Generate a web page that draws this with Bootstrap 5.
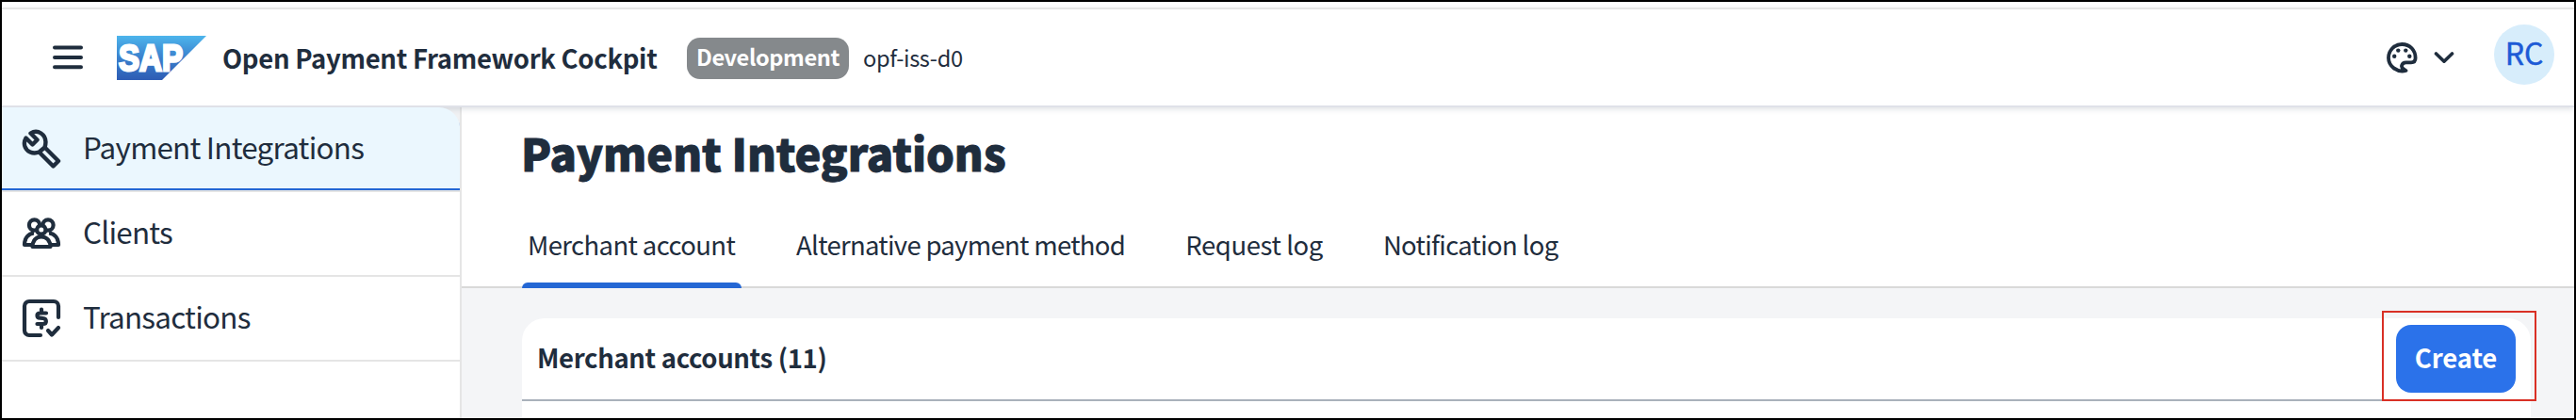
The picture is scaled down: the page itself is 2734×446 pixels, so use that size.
<!DOCTYPE html>
<html lang="en">
<head>
<meta charset="utf-8">
<title>Open Payment Framework Cockpit</title>
<link href="https://cdn.jsdelivr.net/npm/bootstrap@5.3.0/dist/css/bootstrap.min.css" rel="stylesheet">
<script src="https://cdn.jsdelivr.net/npm/bootstrap@5.3.0/dist/js/bootstrap.bundle.min.js" defer></script>
<style>
  body { font-family: "Noto Sans CJK SC", "Open Sans", sans-serif; color: #1f2d3d; background: #fff; overflow: hidden; }
  .frame { height: 446px; border: 2px solid #000; overflow: hidden; }
  .shell { height: 106px; margin-top: 6px; border-top: 2px solid #e5e5e5; border-bottom: 2px solid #dfe1e8; box-shadow: 0 2px 6px rgba(34,53,72,.14); padding: 0 21px 0 54px; z-index: 2; position: relative; background: #fff; }
  svg { display: block; flex: none; }
  .burger { margin-right: 36px; }
  .logo { margin: 1px 17px 0 0; }
  .product { font-size: 27.5px; line-height: 40px; font-weight: 700; letter-spacing: -.31px; width: 493px; margin: 0; white-space: nowrap; }
  .stage { width: 172px; height: 44px; border-radius: 14px; background: #85898c; color: #fff; font-size: 23.6px; font-weight: 700; line-height: 40px; letter-spacing: -.4px; text-align: center; padding: 0; margin-top: 2px; }
  .tenant { font-size: 23.6px; line-height: 40px; letter-spacing: -.35px; margin: 0 0 1px 15px; }
  .avatar { width: 64px; height: 64px; margin: -6px 0 0 42px; background: #d7edfb; color: #1d5bd6; font-size: 32px; line-height: 59px; text-align: center; -webkit-text-stroke: .5px #1d5bd6; }
  .workspace { height: 330px; background: #f4f5f7; }
  .side { width: 488px; border-right: 2px solid #e5e5e5; background: linear-gradient(#f0f1f3 40px, #fff 40px); }
  .side .list-group-item { height: 90px; padding: 0 0 0 21px; border: 0; border-bottom: 2px solid #e5e5e5; border-radius: 0; color: #1f2d3d; background: #fff; font-size: 31.4px; line-height: 44px; letter-spacing: -.75px; }
  .side .list-group-item.active { margin: 0; background: #ebf7fe; border-top-right-radius: 22px; box-shadow: inset 0 -2px #2467d4; }
  .side span { margin-left: 23px; padding-bottom: 5px; }
  .page-head { height: 192px; background: #fff; border-bottom: 2px solid #d9d9d9; padding: 18px 0 0 64px; }
  h1 { font-size: 47px; line-height: 60px; font-weight: 900; letter-spacing: -.1px; -webkit-text-stroke: .9px #1f2d3d; margin: 0 0 0 -1px; }
  .tabs .nav-link { border-radius: 0; padding: 37px 6px 0; margin-right: 52px; height: 114px; color: #1f2d3d; font-size: 27.5px; line-height: 60px; letter-spacing: -.7px; position: relative; white-space: nowrap; }
  .tabs .nav-link.active { width: 233px; margin-right: 52px; letter-spacing: -.62px; }
  .tabs .nav-link.short { letter-spacing: -.4px; }
  .tabs .nav-link.active::after { content: ""; position: absolute; left: 0; right: 0; bottom: 0; height: 6px; border-radius: 6px 6px 0 0; background: #2467d4; }
  .panel { margin: 32px 46px 0 64px; height: 120px; background: #fff; border-radius: 24px 24px 0 0; }
  .panel-top { height: 88px; border-bottom: 2px solid #a9b1bb; padding: 0 16px 0 16px; }
  h2 { font-size: 27.5px; line-height: 40px; font-weight: 700; letter-spacing: -.35px; margin: 0 0 4px; }
  .create { width: 127px; height: 72px; border: 0; border-radius: 16px; background: #2b72ea; color: #fff; font-size: 27.5px; font-weight: 700; line-height: 68px; padding: 0 0 4px; letter-spacing: -.1px; position: relative; }
  .callout { position: absolute; left: -15px; top: -15px; width: 164px; height: 96px; border: 2px solid #d93025; }
</style>
</head>
<body>
<div class="frame">
  <header class="shell d-flex align-items-center">
    <svg class="burger" width="32" height="26" viewBox="0 0 32 26" stroke="#1f2d3d" stroke-width="4" stroke-linecap="round"><path d="M2 2.6h28M2 13h28M2 23.3h28"/></svg>
    <svg class="logo" width="95" height="47" viewBox="0 0 95 47">
      <defs><linearGradient id="sky" x1="0" y1="0" x2="0" y2="1"><stop offset="0" stop-color="#4db5ec"/><stop offset=".5" stop-color="#3a80cd"/><stop offset="1" stop-color="#2d5cb4"/></linearGradient></defs>
      <path d="M0 0h95L48 47H0z" fill="url(#sky)"/>
      <text x="2" y="36.500" textLength="68" lengthAdjust="spacingAndGlyphs" font-family="Liberation Sans, sans-serif" font-weight="700" font-size="38" fill="#fff" stroke="#fff" stroke-width="2.800">SAP</text>
    </svg>
    <h6 class="product">Open Payment Framework Cockpit</h6>
    <span class="badge stage">Development</span>
    <span class="tenant">opf-iss-d0</span>
    <div class="d-flex align-items-center ms-auto">
      <svg width="33" height="33" viewBox="0 0 33 33" fill="none" stroke="#1f2d3d" stroke-width="3.8" stroke-linecap="round" stroke-linejoin="round"><path d="M20.5 30C11 32.500 2 25 2 16.500A14.300 14.300 0 0 1 16.300 2C25 2 30.600 8.500 30.600 16.500C30.600 19.800 29 21.300 26 21.300H20.500C16 21.300 14.500 26.500 18 28.300Z"/><g fill="#1f2d3d" stroke="none"><circle cx="8.200" cy="14.700" r="2.200"/><circle cx="12.300" cy="8.600" r="2.200"/><circle cx="20.300" cy="8.600" r="2.200"/><circle cx="24.300" cy="14.700" r="2.200"/></g></svg>
      <svg width="22" height="14" viewBox="0 0 22 14" style="margin-left:17px" fill="none" stroke="#1f2d3d" stroke-width="3.600" stroke-linecap="round" stroke-linejoin="round"><path d="M2.500 3l8.500 8.200L19.500 3"/></svg>
      <div class="avatar rounded-circle">RC</div>
    </div>
  </header>
  <div class="workspace d-flex">
    <nav class="side list-group rounded-0 flex-shrink-0">
      <a class="list-group-item active d-flex align-items-center">
        <svg width="42" height="42" viewBox="0 0 42 42" fill="none" stroke="#1f2d3d" stroke-width="4.400" stroke-linejoin="round"><path d="M9.500 4.500L16.500 11.500L11.500 16.500L4.500 9.500C1 15.500 3.500 22 9 24.500C12.500 26 16 25.500 18.500 24.500L33.500 39.500L39 34L24.500 19.500C26.500 13 25 7.500 20.500 4.500C17 2.200 13 2.300 9.500 4.500ZM18.500 24.500L24.500 19.500"/></svg>
        <span>Payment Integrations</span></a>
      <a class="list-group-item d-flex align-items-center">
        <svg width="42" height="34" viewBox="0 0 42 34" fill="none" stroke="#1f2d3d" stroke-width="4.200" stroke-linejoin="round"><circle cx="13.500" cy="8" r="5.600"/><circle cx="28" cy="8" r="5.600"/><path d="M11 29H3C3 22 7 17 13 16.500M31 29h8C39 22 35 17 29 16.500"/><circle cx="20.800" cy="13" r="4.600" fill="#fff"/><path d="M11.500 31C11.500 25 15 20.300 20.800 20.300S30.500 25 30.500 31Z" fill="#fff"/></svg>
        <span>Clients</span></a>
      <a class="list-group-item d-flex align-items-center">
        <svg width="42" height="42" viewBox="0 0 42 42" fill="none" stroke="#1f2d3d" stroke-width="4.200" stroke-linecap="round" stroke-linejoin="round"><path d="M20 39H8a5 5 0 0 1-5-5V8a5 5 0 0 1 5-5h26a5 5 0 0 1 5 5v12M28 34l4 4.500L39 31"/><path d="M26 15.500H19.500C15.500 15.500 15.500 20.500 19.500 20.700L22.500 21C27 21.500 27 27 22.500 27H16.500M21 11.500v4M21 27v4"/></svg>
        <span>Transactions</span></a>
    </nav>
    <main class="flex-grow-1">
      <div class="page-head">
        <h1>Payment Integrations</h1>
        <nav class="nav tabs flex-nowrap">
          <a class="nav-link active">Merchant account</a>
          <a class="nav-link">Alternative payment method</a>
          <a class="nav-link short">Request log</a>
          <a class="nav-link">Notification log</a>
        </nav>
      </div>
      <section class="panel">
        <div class="panel-top d-flex align-items-center justify-content-between">
          <h2>Merchant accounts (11)</h2>
          <button class="btn create">Create<i class="callout"></i></button>
        </div>
      </section>
    </main>
  </div>
</div>
</body>
</html>
